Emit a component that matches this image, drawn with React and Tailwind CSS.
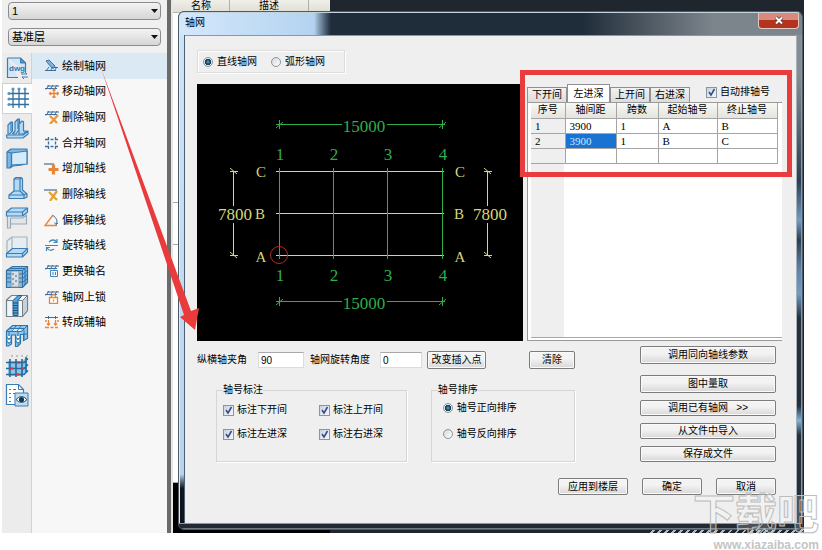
import React, { useState } from "react";

const B = "#3a7cb4";
const L = "#b5daf4";
const O = "#e8853a";

const sideIcons = [
  {
    name: "DWG",
    art: (
      <>
        <path d="M2.500 2h13l5 5v9M13 21.500H2.500V2" fill="#cfe6f7" stroke={B} strokeWidth="1.200" />
        <path d="M15.500 2v5h5z" fill="#4e97ce" stroke={B} />
        <text x="4" y="15" fontSize="8" fontWeight="bold" fill="#2a78b8" fontFamily="Liberation Sans, sans-serif">dwg</text>
        <path d="M16 18h6l-2-2M23 21h-6l2 2" fill="none" stroke={B} />
      </>
    ),
  },
  {
    name: "轴网",
    art: (
      <>
        <path d="M7 3v19M13 3v19M19 3v19M3 7.500h20M3 13h20M3 18.500h20" stroke="#2f6f9f" strokeWidth="1.300" fill="none" />
        <g fill="#5a93bd">
          <circle cx="7" cy="3" r="1.600" /><circle cx="13" cy="3" r="1.600" /><circle cx="19" cy="3" r="1.600" />
          <circle cx="3" cy="7.500" r="1.600" /><circle cx="3" cy="13" r="1.600" /><circle cx="3" cy="18.500" r="1.600" />
        </g>
      </>
    ),
  },
  {
    name: "墙",
    art: (
      <g fill={L} stroke={B} strokeWidth="1.200" strokeLinejoin="round">
        <path d="M1.500 18 18 18l5-4v3l-5 4H2z" />
        <path d="M3 17V8l3-3h1.500v9l-3 3z" />
        <path d="M7.500 17 10 14V5l3-3h1.500v10L11 17z" />
        <path d="M14 16V7l3-3 1.500.500V14l3 0-3 3h-5z" />
        <path d="M6 5v9M13 2v10" fill="none" />
      </g>
    ),
  },
  {
    name: "板",
    art: (
      <g fill="#7fb7e2" stroke={B} strokeWidth="1.200" strokeLinejoin="round">
        <path d="M2 5l4-3h16v15h-3l-2 1-9 1-3 2H2z" />
        <path d="M6.500 6 22 4v13l-15.500 1z" fill="#d5ebfa" />
        <path d="M2 5l4.500 1v12L5 21" fill="none" />
      </g>
    ),
  },
  {
    name: "柱",
    art: (
      <g fill={L} stroke={B} strokeWidth="1.200" strokeLinejoin="round">
        <path d="M9 3l2-1.500h5L17.500 3v11l4.500 4v3l-3 1.500H4V19l5-4z" />
        <path d="M9 3h6v12l4 4v3M15 3l1.500-1.500M4 19h15l3-1.500M9 15h6" fill="none" />
      </g>
    ),
  },
  {
    name: "梁",
    art: (
      <g stroke={B} strokeWidth="1.200" strokeLinejoin="round">
        <path d="M2.500 9v13h3V12h12l4-3v9h-16" fill="#dfe6ea" stroke="#9aaab4" />
        <path d="M1.500 6l5-4h16v4l-5 4h-16z" fill={L} />
        <path d="M1.500 6h16l5-4M17.500 6v4" fill="none" />
      </g>
    ),
  },
  {
    name: "楼板",
    art: (
      <g stroke={B} strokeWidth="1.200" strokeLinejoin="round">
        <path d="M2 17V6l5-4h15v12L17 18H2z" fill="#e6edf1" stroke="#a3b4bf" />
        <path d="M7 2v12" stroke="#a3b4bf" />
        <path d="M1.500 18.500l6-5h15v3.500l-5 5h-16z" fill={L} />
        <path d="M1.500 18.500h16l5-5M17.500 18.500V22" fill="none" />
      </g>
    ),
  },
  {
    name: "砌体",
    art: (
      <>
        <path d="M1.500 5.500l6-4h15v16l-5 5h-16z" fill="#7db9e4" stroke="#356f9c" strokeWidth="1.200" />
        <path d="M6 6h8v16H6z" fill="#dcdfe1" stroke="#7899af" />
        <path d="M14 6h4v16h-4z" fill="#9bb4c4" />
        <path d="M1.500 5.500h16l5-4M17.500 5.500v17M5 3.500h15M2 9h4M2 13h4M2 17h4M14 9h4l5-4M14 13h4l5-4M14 17h4l5-4M7 9h2M10 11h2M7 14h2M10 16h2M7 19h2M20 4v16" stroke="#2f71a6" fill="none" />
      </>
    ),
  },
  {
    name: "构造柱",
    art: (
      <>
        <path d="M1.500 6l5-4.500h16v15l-5 6h-16z" fill="#f3f4f5" stroke="#71818c" strokeWidth="1.200" />
        <path d="M17.500 6.500l5-5v15l-5 6z" fill="#c7d0d6" stroke="#71818c" />
        <path d="M8 6.500l5-5h4l-4 5v15H8z" fill="#56a4de" stroke="#1f5f90" />
        <path d="M8 9h5M8 11.500h5M8 14h5M8 16.500h5M8 19h5" stroke="#174d78" />
        <path d="M1.500 6.500H8M13 6.500h4.500" stroke="#71818c" />
      </>
    ),
  },
  {
    name: "门窗",
    art: (
      <>
        <path d="M1.500 7l6-5.500h15v13l-4 2v-6h-3v9l-3 3h-2V11H6.500v9l-3 2h-2z" fill="#8fc6ee" stroke="#2d76ad" strokeWidth="1.200" />
        <path d="M7 5h9v3H7z" fill="#e7f1f8" />
        <path d="M1.500 7.500h15l6-6M5 4.500h14M4 8v12M13 8v13M19 6v9M11 2 7 7M16 2l-4 5M2 14h4M11 14h4M18 10h4M2 18h4M11 18h4" stroke="#2d76ad" fill="none" />
        <path d="M3 12h2v2H3zM12 16h2v2h-2zM3 16h2v2H3zM12 12h2v2h-2z" fill="#fff" />
      </>
    ),
  },
  {
    name: "钢筋",
    art: (
      <>
        <path d="M3 7h14l5-4v14l-5 5H3z" fill="#8cc3ec" />
        <path d="M5 5v18M11 5v18M17 5v18M1 8.500h18l4-4M1 14.500h18l4-4M1 20.500h18l4-4M21 3v16" stroke="#27699c" strokeWidth="1.600" fill="none" />
        <path d="M6 2h2M11 2h2M16 2h2M21 2h2" stroke="#9a9a9a" />
        <path d="M5 13.500h3v2H5zM12 7.500h3v2h-3zM11 19.500h3v2h-3zM17 13.500h2v2h-2z" fill="#c2404a" />
      </>
    ),
  },
  {
    name: "查看",
    art: (
      <>
        <path d="M1.500 1.500h12l5 5v15h-17z" fill="#fff" stroke={B} strokeWidth="1.200" />
        <path d="M13.500 1.500v5h5M4 6.500h2M8 6.500h3M4 10.500h2M8 10.500h2M4 14.500h2M4 18.500h2" stroke={B} fill="none" />
        <path d="M10 10h13v13H10z" fill="#bcdcf2" stroke={B} />
        <path d="M11 16.500q5.500-6 11 0q-5.500 6-11 0z" fill="#fff" stroke="#27506e" />
        <circle cx="16.500" cy="16.500" r="2.600" fill="#153a55" />
      </>
    ),
  },
];

const slats = (
  <path d="M2 5.500 5 1M6 5.500 9 1M10 5.500 13 1M3 2h12M1 4.500h12" stroke="#3c6d9e" fill="none" />
);

const menu = [
  ["绘制轴网", <><path d="M2 2l3-1 6 6-1 2-2 0z" fill="#7fb2dc" stroke="#3c6d9e" /><path d="M2 12l3-4M6 12l3-4M10 12l3-4M1 11.500h11M9 8.500h5" stroke="#3c6d9e" fill="none" /></>],
  ["移动轴网", <>{slats}<path d="M10 5v9M5.500 9.500h9M8.500 6.500 10 5l1.500 1.500M8.500 12.500 10 14l1.500-1.500M7 8 5.500 9.500 7 11M13 8l1.500 1.500L13 11" stroke={O} strokeWidth="1.300" fill="none" /></>],
  ["删除轴网", <>{slats}<path d="M6 6l7 7M14 5l-8 9" stroke="#eb9a32" strokeWidth="2.400" /></>],
  ["合并轴网", <path d="M4.500 1v3M11.500 1v3M4.500 10v3M11.500 10v3M1 3.500h4M6.500 3.500h3M11 3.500h3M1 10.500h4M6.500 10.500h3M11 10.500h3M4.500 5.500v3M11.500 5.500v3" stroke="#3c6d9e" strokeWidth="1.300" fill="none" />],
  ["增加轴线", <><path d="M0 3h10" stroke="#456c8f" strokeWidth="1.200" /><path d="M9.500 3.500v10M4.500 8.500h10" stroke={O} strokeWidth="3.200" /></>],
  ["删除轴线", <><path d="M0 3h13" stroke="#456c8f" strokeWidth="1.200" /><path d="M5 5l8 8M13 4l-7 10" stroke="#e5a02e" strokeWidth="2.200" /></>],
  ["偏移轴线", <><path d="M13 12.500H1L9 2" fill="none" stroke={O} strokeWidth="1.400" /><path d="M9 2.500q6 4 3 9M10.500 9.500l1.500 2 2-1.500" stroke="#456c8f" fill="none" /></>],
  ["旋转轴线", <path d="M5 4q4-4 8 0M13 1v3.500H9.500M1 7.500h13M10 11q-4 3-7-1M2.500 13V9.500H6" stroke="#4386bb" strokeWidth="1.200" fill="none" />],
  ["更换轴名", <>{slats}<path d="M6.500 6.500h7v6h-7zM9 8v3M11.500 8v3" fill="#f7f7f7" stroke="#4386bb" /></>],
  ["轴网上锁", <>{slats}<path d="M5.500 7.500h8v6h-8zM7.500 7.500V6q2-3 4 0v1.500M9.500 9.500v2" fill="#fff" stroke={O} strokeWidth="1.300" /></>],
  ["转成辅轴", <><path d="M1 2.500h13M4.500 1v3M11.500 1v3" stroke="#456c8f" /><path d="M4.500 5v5M3 8.500l1.500 1.500L6 8.500M11.500 5v5M10 8.500l1.500 1.500L13 8.500M1 12.500h4M6.500 12.500h3M11 12.500h3M1 6h2M13 6h2" stroke={O} strokeWidth="1.300" fill="none" /></>],
];

function Combo({ label, options }) {
  return (
    <div className="relative h-[18px]">
      <select
        aria-label={label}
        className="block h-full w-full appearance-none rounded-sm border border-[#8c8c8c] bg-linear-to-b from-[#f3f3f3] to-[#d6d6d6] pl-[3px] text-[11px] leading-4 text-black"
      >
        {options.map((o) => (
          <option key={o}>{o}</option>
        ))}
      </select>
      <svg className="pointer-events-none absolute top-[7px] right-[3px]" width="7" height="4" aria-hidden="true">
        <path d="M0 0h7L3.500 4z" fill="#111" />
      </svg>
    </div>
  );
}

function Check({ label }) {
  const [on, setOn] = useState(true);
  return (
    <label className="flex items-center gap-[3px] leading-3 whitespace-nowrap">
      <span className="relative block size-[11px]">
        <input
          type="checkbox"
          checked={on}
          onChange={() => setOn(!on)}
          className="block size-[11px] appearance-none border border-[#8796a5] bg-linear-to-br from-[#c9d3de] to-[#f5f8fb]"
        />
        {on && (
          <svg className="pointer-events-none absolute inset-0" width="11" height="11" viewBox="0 0 11 11" aria-hidden="true">
            <path d="M3 5l2 3 3.500-6" fill="none" stroke="#35478c" strokeWidth="1.500" />
          </svg>
        )}
      </span>
      {label}
    </label>
  );
}

function Radio({ name, label, defaultChecked }) {
  return (
    <label className="flex items-center gap-[4px] leading-3 whitespace-nowrap">
      <input
        type="radio"
        name={name}
        defaultChecked={defaultChecked}
        className="block size-[10px] appearance-none rounded-full border border-[#8d9499] bg-linear-to-br from-[#d4d7d9] to-white checked:bg-[radial-gradient(circle,#5fb5dc_0,#1c4763_2px,#1c4763_3px,#dfe9ef_3px)]"
      />
      {label}
    </label>
  );
}

function Btn({ children, className = "" }) {
  return (
    <button
      type="button"
      className={
        "flex items-center justify-center rounded-xs border border-[#7c7c7c] bg-linear-to-b from-[#f3f3f3] from-40% to-[#d8d8d8] leading-3 whitespace-pre shadow-[inset_0_0_0_1px_#fafafa] " +
        className
      }
    >
      {children}
    </button>
  );
}

const G = "#2fae4a";
const Y = "#d6d67a";

function AxisDrawing() {
  const xs = [82, 136, 190, 245];
  return (
    <svg className="block h-[257px] w-[326px] shrink-0 bg-black" viewBox="0 0 326 257" role="img" aria-label="轴网预览">
      <g stroke={Y} fill="none">
        <path d="M79 87.500h168M79 129.500h168M79 171.500h168" />
        {[36, 290].map((x) => (
          <g key={x}>
            <path d={`M${x}.500 87v35M${x}.500 139v33M${x - 3} 87.500h8M${x - 3} 171.500h8`} />
            <path d={`M${x - 3} 84l7 6M${x - 3} 168l7 6`} />
          </g>
        ))}
      </g>
      <g stroke={G} fill="none">
        {xs.map((x) => (
          <path key={x} d={`M${x}.500 84v91`} />
        ))}
        {[40, 217].map((y) => (
          <g key={y}>
            <path d={`M79 ${y}.500h66M190 ${y}.500h58M82.500 ${y - 4}v9M245.500 ${y - 4}v9`} />
            <path d={`M79 ${y + 4}l7-6M242 ${y + 4}l7-6`} />
          </g>
        ))}
      </g>
      <circle cx="82" cy="171" r="8.500" fill="none" stroke="#b52a20" />
      <g fontFamily="Liberation Serif, serif" fontSize="17" textAnchor="middle" fill={G}>
        <text x="167" y="48">15000</text>
        <text x="167" y="225">15000</text>
        {xs.map((x, i) => (
          <g key={x}>
            <text x={x + 1} y="76">{i + 1}</text>
            <text x={x + 1} y="197">{i + 1}</text>
          </g>
        ))}
      </g>
      <g fontFamily="Liberation Serif, serif" fontSize="17" textAnchor="middle" fill={Y}>
        <text x="38" y="136">7800</text>
        <text x="293" y="136">7800</text>
      </g>
      <g fontFamily="Liberation Serif, serif" fontSize="15" textAnchor="middle" fill={Y}>
        <text x="64" y="93">C</text><text x="63" y="135">B</text><text x="64" y="178">A</text>
        <text x="263" y="93">C</text><text x="262" y="135">B</text><text x="263" y="178">A</text>
      </g>
    </svg>
  );
}

const tabs = ["下开间", "左进深", "上开间", "右进深"];
const rows = [
  ["1", "3900", "1", "A", "B"],
  ["2", "3900", "1", "B", "C"],
  ["", "", "", "", ""],
];

function SpacingPanel() {
  const [tab, setTab] = useState("左进深");
  return (
    <section className="relative ml-[4px] flex min-w-0 flex-1 flex-col">
      <div className="flex h-[18px] items-end justify-between">
        <div role="tablist" className="flex items-end">
          {tabs.map((t) => (
            <button
              key={t}
              type="button"
              role="tab"
              aria-selected={t === tab}
              onClick={() => setTab(t)}
              className={
                t === tab
                  ? "h-[18px] w-[43px] border border-b-0 border-[#909090] bg-white leading-4"
                  : "h-[15px] w-[40px] border border-b-0 border-[#909090] bg-linear-to-b from-[#f2f2f2] to-[#dcdcdc] leading-3"
              }
            >
              {t}
            </button>
          ))}
        </div>
        <div className="mr-[12px] mb-[4px]">
          <Check label="自动排轴号" />
        </div>
      </div>
      <div className="flex flex-1 flex-col border-y border-l border-[#9a9a9a] bg-white pb-[2px] pl-[3px]">
        <div className="flex-1 border-b border-[#a8a8a8] bg-linear-to-r from-[#efefef] from-[33px] to-white to-[33px]">
          <table className="w-[246px] table-fixed border-collapse">
            <colgroup>
              <col className="w-[34px]" />
              <col className="w-[51px]" />
              <col className="w-[42px]" />
              <col className="w-[59px]" />
              <col className="w-[60px]" />
            </colgroup>
            <thead>
              <tr className="h-[15px] bg-linear-to-b from-[#f8f8f4] to-[#e4e4de]">
                {["序号", "轴间距", "跨数", "起始轴号", "终止轴号"].map((h) => (
                  <th key={h} className="border-r border-b border-[#a5a5a5] p-0 font-normal leading-3">{h}</th>
                ))}
              </tr>
            </thead>
            <tbody className="font-['Liberation_Serif','Noto_Sans_CJK_SC',serif] text-[11px]">
              {rows.map((r, i) => (
                <tr key={i} className="h-[15px]">
                  {r.map((c, j) => (
                    <td
                      key={j}
                      className={
                        "border-r border-b border-[#a5a5a5] py-0 pr-0 pl-[4px] leading-3 " +
                        (i === 1 && j === 1 ? "bg-[#1873d2] text-[#cfe6ff]" : j === 0 ? "bg-[#efefef]" : "bg-white")
                      }
                    >
                      {c}
                    </td>
                  ))}
                </tr>
              ))}
            </tbody>
          </table>
        </div>
      </div>
      <div className="pointer-events-none absolute -top-[14px] -right-[10px] -left-[7px] h-[107px] border-[5px] border-[#e83c3e]" />
    </section>
  );
}

function Dialog() {
  return (
    <section
      role="dialog"
      aria-label="轴网"
      className="absolute top-[11px] right-[1px] bottom-[3px] left-[178px] flex flex-col overflow-hidden rounded-md border border-[#4d5a66] bg-[#26323d] text-[10px] text-black"
    >
      <header className="flex h-[23px] shrink-0 items-start justify-between border-t border-[#c5d3de] bg-linear-to-r from-[#d4e8fb] via-[#b4d3f0] via-[135px] to-[#1f2c39] to-[152px]">
        <h1 className="pt-[2px] pl-[6px] leading-4">轴网</h1>
        <div className="flex h-full w-[220px] justify-end bg-linear-to-r from-transparent to-[#7d858c] to-60% pr-[3px]">
          <button
            type="button"
            aria-label="关闭"
            className="flex h-[16px] w-[41px] items-center justify-center rounded-b-sm border border-t-0 border-[#e3c7c2] bg-linear-to-b from-[#d98a7c] from-45% to-[#b3331f] to-50%"
          >
            <svg width="10" height="9" viewBox="0 0 10 9" aria-hidden="true">
              <path d="M2 1.500l6 6M8 1.500l-6 6" stroke="#5b3833" strokeWidth="3.600" />
              <path d="M2 1.500l6 6M8 1.500l-6 6" stroke="#fff" strokeWidth="2" />
            </svg>
          </button>
        </div>
      </header>
      <div className="flex min-h-0 flex-1">
        <div className="w-[6px] shrink-0 border-x border-r-[#4c6074] border-l-[#dcebf7] bg-linear-to-b from-[#cfe3f6] via-[#b9d3ec] via-90% to-[#101418] to-93%" />
        <main className="flex min-w-0 flex-1 flex-col border-t border-[#8e979e] bg-[#efefef] pr-[14px] pl-[12px]">
          <div className="mt-[14px] flex h-[23px] w-[148px] shrink-0 items-center gap-[14px] border border-[#dcdcdc] pl-[5px] shadow-[inset_1px_1px_0_#fff,1px_1px_0_#fff]">
            <Radio name="kind" label="直线轴网" defaultChecked />
            <Radio name="kind" label="弧形轴网" />
          </div>
          <div className="mt-[11px] flex shrink-0">
            <AxisDrawing />
            <SpacingPanel />
          </div>
          <div className="flex justify-between pr-[6px]">
            <div className="w-[378px]">
              <div className="mt-[10px] flex h-[18px] items-center">
                <label htmlFor="angle" className="w-[61px] leading-3">纵横轴夹角</label>
                <input id="angle" defaultValue="90" className="mr-[6px] h-[16px] w-[46px] border border-[#dcdcdc] border-t-[#a9a9a9] bg-white px-[2px] font-['Liberation_Sans',sans-serif]" />
                <label htmlFor="rot" className="w-[70px] leading-3">轴网旋转角度</label>
                <input id="rot" defaultValue="0" className="mr-[5px] h-[16px] w-[42px] border border-[#dcdcdc] border-t-[#a9a9a9] bg-white px-[2px] font-['Liberation_Sans',sans-serif]" />
                <Btn className="h-[18px] w-[59px]">改变插入点</Btn>
                <Btn className="ml-auto h-[18px] w-[46px]">清除</Btn>
              </div>
              <div className="mt-[15px] flex gap-[24px] pl-[19px]">
                <fieldset className="h-[78px] w-[193px] border border-[#d6d6d6] px-[6px] shadow-[1px_1px_0_#fff]">
                  <legend className="leading-3">轴号标注</legend>
                  <div className="mt-[8px] flex gap-[32px]">
                    <div className="flex flex-col gap-[12px]">
                      <Check label="标注下开间" />
                      <Check label="标注左进深" />
                    </div>
                    <div className="flex flex-col gap-[12px]">
                      <Check label="标注上开间" />
                      <Check label="标注右进深" />
                    </div>
                  </div>
                </fieldset>
                <fieldset className="h-[78px] w-[146px] border border-[#d6d6d6] px-[6px] shadow-[1px_1px_0_#fff]">
                  <legend className="leading-3">轴号排序</legend>
                  <div className="mt-[6px] flex flex-col gap-[14px] pl-[5px]">
                    <Radio name="order" label="轴号正向排序" defaultChecked />
                    <Radio name="order" label="轴号反向排序" />
                  </div>
                </fieldset>
              </div>
            </div>
            <div className="mt-[5px] flex w-[136px] flex-col">
              <Btn className="h-[18px]">调用同向轴线参数</Btn>
              <Btn className="mt-[11px] h-[18px]">图中量取</Btn>
              <Btn className="mt-[7px] h-[16px]">{"调用已有轴网   >>"}</Btn>
              <Btn className="mt-[7px] h-[16px]">从文件中导入</Btn>
              <Btn className="mt-[7px] h-[16px]">保存成文件</Btn>
            </div>
          </div>
          <div className="mt-[16px] flex justify-end gap-[14px] pr-[6px]">
            <Btn className="h-[17px] w-[70px]">应用到楼层</Btn>
            <Btn className="h-[17px] w-[60px]">确定</Btn>
            <Btn className="h-[17px] w-[60px]">取消</Btn>
          </div>
        </main>
        <div className="w-[6px] shrink-0 border-x border-r-[#8d979f] border-l-[#a7b0b7] bg-[linear-gradient(#858d94_8%,#2c3e50_30%,#6f9cc8_38%,#2c3e50_42%,#5d83aa_48%,#6f9cc8_53%,#22303c_58%,#22303c_76%,#7fb4dc_79%,#22303c_82%)]" />
      </div>
      <div className="h-[6px] shrink-0 border-y border-t-[#8d979f] border-b-[#6f7a83] bg-[#222b33]" />
    </section>
  );
}

export default function App() {
  const [active, setActive] = useState("绘制轴网");
  return (
    <div className="relative h-screen min-h-[550px] overflow-hidden bg-white pr-[18px] pb-[17px] font-['Liberation_Sans','Noto_Sans_CJK_SC',sans-serif] text-black">
      <div className="relative flex h-full">
        <aside className="flex w-[167px] shrink-0 flex-col border-l-2 border-white bg-[#f0f0f0]">
          <div className="flex flex-col gap-[8px] px-[6px] pt-[2px]">
            <Combo label="楼层" options={["1"]} />
            <Combo label="标准层" options={["基准层"]} />
          </div>
          <div className="mt-[7px] flex flex-1">
            <nav aria-label="构件" className="w-[30px] border-r border-[#d2d2d2] bg-[#ececec]">
              <div className="flex h-[357px] flex-col">
                {sideIcons.map((ic, i) => (
                  <button
                    key={ic.name}
                    type="button"
                    aria-label={ic.name}
                    className={
                      i === 1
                        ? "-mr-px flex flex-1 items-center justify-center border-y border-l border-[#cfcfcf] bg-white"
                        : "flex flex-1 items-center justify-center"
                    }
                  >
                    <svg width="24" height="24" viewBox="0 0 24 24" aria-hidden="true">{ic.art}</svg>
                  </button>
                ))}
              </div>
            </nav>
            <nav aria-label="轴网命令" className="flex-1 bg-[#f7f7f7]">
              <ul className="flex h-[282px] flex-col">
                {menu.map(([text, art]) => (
                  <li key={text} className="flex flex-1">
                    <button
                      type="button"
                      onClick={() => setActive(text)}
                      className={
                        "flex flex-1 items-center gap-[3px] pl-[12px] text-[11px] leading-4 " +
                        (active === text ? "bg-[#dbe9f4]" : "")
                      }
                    >
                      <svg width="15" height="14" viewBox="0 0 15 14" aria-hidden="true">{art}</svg>
                      {text}
                    </button>
                  </li>
                ))}
              </ul>
            </nav>
          </div>
        </aside>
        <div className="w-[4px] shrink-0 bg-[#6b6b69]" />
        <div className="flex w-[159px] shrink-0 flex-col border-l-2 border-[#e6e6e6] bg-white text-[10px]">
          <div className="flex h-[13px] shrink-0 items-end border-b border-[#b5b5b0] bg-linear-to-b from-[#f0f0ea] to-[#dedfd5] text-center leading-3">
            <span className="w-[57px] border-r border-[#b0b0aa]">名称</span>
            <span className="w-[79px] border-r border-[#b0b0aa]">描述</span>
          </div>
          <div className="h-[190px] shrink-0 border-b border-[#a9a9a9]" />
          <div className="h-[42px] shrink-0 border-b border-[#a9a9a9]" />
          <div className="flex-1 border-b border-[#a9a9a9]" />
          <div className="h-[50px] shrink-0 bg-black" />
        </div>
        <div className="flex flex-1 flex-col justify-end bg-[#20262e]">
          <div className="ml-auto h-[4px] w-[155px] bg-[repeating-linear-gradient(135deg,#1b242c_0,#1b242c_3px,#aeb9c1_3px,#aeb9c1_5px)]" />
        </div>
        <Dialog />
        <svg className="pointer-events-none absolute top-[60px] left-[95px]" width="110" height="275" viewBox="95 60 110 275" aria-hidden="true">
          <path d="M101 68 191 311 199 308 195 330 180 317 184 315z" fill="#e93b3c" />
        </svg>
      </div>
      <div className="pointer-events-none absolute right-[3px] bottom-0 flex flex-col items-end">
        <span className="text-[42px] leading-[52px] font-bold text-white/20 [-webkit-text-stroke:1px_#bdbdbd]">下载吧</span>
        <span className="text-[12px] leading-[9px] font-bold text-[#c4c4c4]">www.xiazaiba.com</span>
      </div>
    </div>
  );
}
